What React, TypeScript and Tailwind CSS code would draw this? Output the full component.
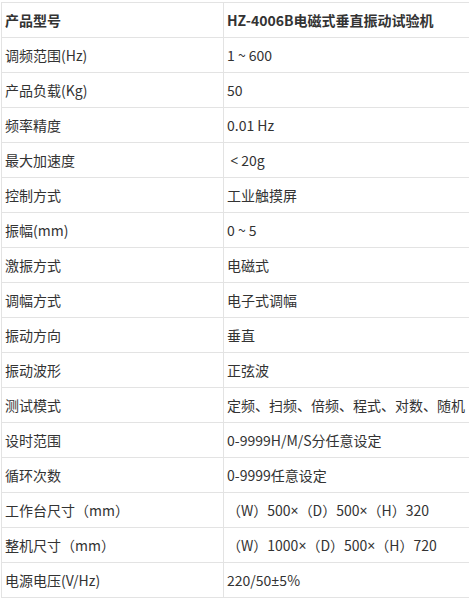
const L = ({ c }: { c: string }) => (
  <span style={{ fontFamily: '"Noto Sans", sans-serif' }}>{c}</span>
);

const rows: [string, React.ReactNode][] = [
  ["调频范围(Hz)", "1 ~ 600"],
  ["产品负载(Kg)", "50"],
  ["频率精度", "0.01 Hz"],
  ["最大加速度", <>&nbsp;<L c="<" /> 20g</>],
  ["控制方式", "工业触摸屏"],
  ["振幅(mm)", "0 ~ 5"],
  ["激振方式", "电磁式"],
  ["调幅方式", "电子式调幅"],
  ["振动方向", "垂直"],
  ["振动波形", "正弦波"],
  ["测试模式", "定频、扫频、倍频、程式、对数、随机"],
  ["设时范围", "0-9999H/M/S分任意设定"],
  ["循环次数", "0-9999任意设定"],
  ["工作台尺寸（mm）", <>（W）500<L c="×" />（D）500<L c="×" />（H）320</>],
  ["整机尺寸（mm）", <>（W）1000<L c="×" />（D）500<L c="×" />（H）720</>],
  ["电源电压(V/Hz)", <>220/50<L c="±" />5%</>],
];

export default function App() {
  return (
    <div
      className="w-[469px] h-[603px] overflow-hidden bg-white pt-[2px] pl-[1px]"
      style={{ fontFamily: '"Noto Sans CJK SC", "Noto Sans", sans-serif' }}
    >
      <table className="w-[490px] border-collapse text-[14px] text-[#333333]">
        <tbody>
          <tr className="h-[35px]">
            <td className="w-[222px] border border-[#e3e3e3] px-[3px] font-bold">产品型号</td>
            <td className="border border-[#e3e3e3] px-[3px] font-bold">HZ-4006B电磁式垂直振动试验机</td>
          </tr>
          {rows.map(([k, v]) => (
            <tr key={k} className="h-[35px]">
              <td className="border border-[#e3e3e3] px-[3px]">{k}</td>
              <td className="border border-[#e3e3e3] px-[3px] whitespace-nowrap">{v}</td>
            </tr>
          ))}
        </tbody>
      </table>
    </div>
  );
}
